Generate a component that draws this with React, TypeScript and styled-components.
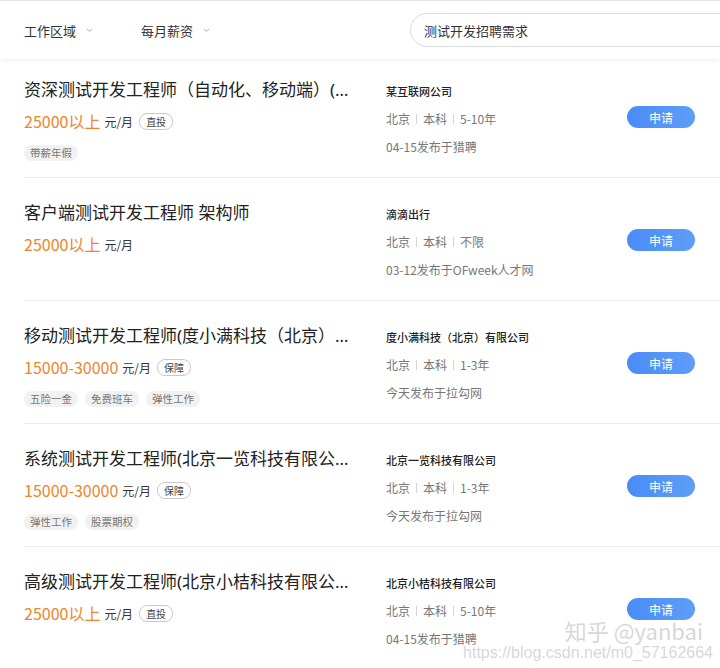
import React from 'react';
import styled, { createGlobalStyle } from 'styled-components';

const GlobalStyle = createGlobalStyle`
  html, body {
    margin: 0;
    padding: 0;
    background: #fff;
  }
  body {
    font-family: "Noto Sans CJK SC", "Noto Sans", "Liberation Sans", sans-serif;
    color: #333;
  }
`;

const Page = styled.div`
  position: relative;
  width: 720px;
  height: 668px;
  overflow: hidden;
  background: #fff;
  border-top: 1px solid #e6e6e6;
  box-sizing: border-box;
`;

const Header = styled.div`
  position: relative;
  z-index: 1;
  height: 58px;
  display: flex;
  align-items: center;
  padding-left: 24px;
  background: #fff;
  box-shadow: 0 2px 5px rgba(0, 0, 0, 0.06);
`;

const Filter = styled.div<{ $width: number }>`
  width: ${p => p.$width}px;
  display: flex;
  align-items: center;
  gap: 10px;
  font-size: 13px;
  color: #333;
  svg {
    color: #aaa;
  }
`;

const Search = styled.div`
  margin-left: auto;
  margin-right: -20px;
  width: 330px;
  height: 34px;
  box-sizing: border-box;
  border: 1px solid #dcdcdc;
  border-radius: 17px;
  display: flex;
  align-items: center;
  padding-left: 13px;
  font-size: 13px;
  color: #333;
`;

const List = styled.div`
  margin-left: 24px;
  margin-top: -4px;
`;

const Row = styled.div`
  height: 122px;
  border-bottom: 1px solid #ececec;
  display: flex;
`;

const Left = styled.div`
  width: 362px;
  padding-top: 22px;
  box-sizing: border-box;
`;

const Title = styled.div`
  width: 326px;
  font-family: "Noto Sans", "Noto Sans CJK SC", sans-serif;
  font-size: 17px;
  line-height: 26px;
  color: #222;
  white-space: nowrap;
  overflow: hidden;
  text-overflow: ellipsis;
`;

const SalaryLine = styled.div`
  margin-top: 7px;
  display: flex;
  align-items: center;
  height: 22px;
`;

const Salary = styled.span`
  font-size: 16px;
  color: #f0832c;
`;

const Unit = styled.span`
  margin-left: 4px;
  font-size: 12px;
  color: #333;
`;

const Badge = styled.span`
  margin-left: 6px;
  padding: 0 6px;
  height: 15px;
  line-height: 15px;
  border: 1px solid #c9c9c9;
  border-radius: 8px;
  font-size: 10px;
  color: #444;
`;

const Tags = styled.div`
  margin-top: 13px;
  display: flex;
  gap: 7px;
`;

const Tag = styled.span`
  padding: 0 6px;
  height: 16px;
  line-height: 16px;
  border-radius: 8px;
  background: #f1f1f1;
  font-size: 10.5px;
  color: #777;
`;

const Right = styled.div`
  flex: 1;
  padding-top: 27px;
  display: flex;
  flex-direction: column;
  gap: 10px;
  font-size: 12px;
  line-height: 18px;
`;

const Company = styled.div`
  color: #222;
  font-size: 11px;
  font-weight: 500;
`;

const Info = styled.div`
  color: #777;
  display: flex;
  align-items: center;
`;

const Sep = styled.span`
  display: inline-block;
  width: 1px;
  height: 10px;
  background: #d5d5d5;
  margin: 0 6px;
`;

const Apply = styled.button`
  align-self: center;
  margin-right: 25px;
  margin-top: 2px;
  width: 68px;
  height: 22px;
  border: none;
  border-radius: 11px;
  background: linear-gradient(90deg, #4a8cf6, #5e9ef8);
  color: #fff;
  font-family: inherit;
  font-size: 12px;
  padding: 0;
`;

const Watermark = styled.div`
  position: absolute;
  right: 7px;
  bottom: 6px;
  text-align: right;
  color: rgba(205, 205, 205, 0.8);
  pointer-events: none;
  .zh {
    font-size: 22px;
    line-height: 28px;
    margin-right: 10px;
  }
  .url {
    font-family: "Liberation Sans", sans-serif;
    font-size: 16px;
    line-height: 18px;
  }
`;

const Chevron = () => (
  <svg width="7" height="5" viewBox="0 0 7 5" fill="none">
    <path d="M1 1l2.5 2.5L6 1" stroke="currentColor" strokeWidth="1" />
  </svg>
);

type Job = {
  title: string;
  salary: string;
  badge?: string;
  tags: string[];
  company: string;
  edu: string;
  exp: string;
  date: string;
};

const jobs: Job[] = [
  {
    title: '资深测试开发工程师（自动化、移动端）(测试开发)',
    salary: '25000以上',
    badge: '直投',
    tags: ['带薪年假'],
    company: '某互联网公司',
    edu: '本科',
    exp: '5-10年',
    date: '04-15发布于猎聘',
  },
  {
    title: '客户端测试开发工程师 架构师',
    salary: '25000以上',
    tags: [],
    company: '滴滴出行',
    edu: '本科',
    exp: '不限',
    date: '03-12发布于OFweek人才网',
  },
  {
    title: '移动测试开发工程师(度小满科技（北京）有限公司)',
    salary: '15000-30000',
    badge: '保障',
    tags: ['五险一金', '免费班车', '弹性工作'],
    company: '度小满科技（北京）有限公司',
    edu: '本科',
    exp: '1-3年',
    date: '今天发布于拉勾网',
  },
  {
    title: '系统测试开发工程师(北京一览科技有限公司)',
    salary: '15000-30000',
    badge: '保障',
    tags: ['弹性工作', '股票期权'],
    company: '北京一览科技有限公司',
    edu: '本科',
    exp: '1-3年',
    date: '今天发布于拉勾网',
  },
  {
    title: '高级测试开发工程师(北京小桔科技有限公司)',
    salary: '25000以上',
    badge: '直投',
    tags: [],
    company: '北京小桔科技有限公司',
    edu: '本科',
    exp: '5-10年',
    date: '04-15发布于猎聘',
  },
];

export default function App() {
  return (
    <Page>
      <GlobalStyle />
      <Header>
        <Filter $width={117}>
          工作区域 <Chevron />
        </Filter>
        <Filter $width={120}>
          每月薪资 <Chevron />
        </Filter>
        <Search>测试开发招聘需求</Search>
      </Header>
      <List>
        {jobs.map(j => (
          <Row key={j.title}>
            <Left>
              <Title>{j.title}</Title>
              <SalaryLine>
                <Salary>{j.salary}</Salary>
                <Unit>元/月</Unit>
                {j.badge && <Badge>{j.badge}</Badge>}
              </SalaryLine>
              {j.tags.length > 0 && (
                <Tags>
                  {j.tags.map(t => (
                    <Tag key={t}>{t}</Tag>
                  ))}
                </Tags>
              )}
            </Left>
            <Right>
              <Company>{j.company}</Company>
              <Info>
                北京
                <Sep />
                {j.edu}
                <Sep />
                {j.exp}
              </Info>
              <Info>{j.date}</Info>
            </Right>
            <Apply>申请</Apply>
          </Row>
        ))}
      </List>
      <Watermark>
        <div className="zh">知乎 @yanbai</div>
        <div className="url">https://blog.csdn.net/m0_57162664</div>
      </Watermark>
    </Page>
  );
}
